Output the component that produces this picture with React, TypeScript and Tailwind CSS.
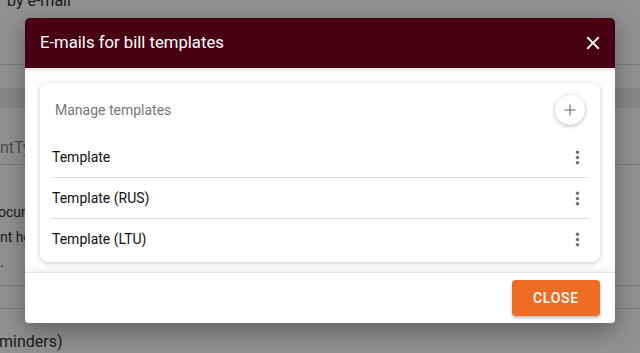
import React from "react";

function MoreVert() {
  return (
    <svg width="21" height="21" viewBox="0 0 24 24" fill="#757575">
      <path d="M12 8c1.1 0 2-.9 2-2s-.9-2-2-2-2 .9-2 2 .9 2 2 2zm0 2c-1.1 0-2 .9-2 2s.9 2 2 2 2-.9 2-2-.9-2-2-2zm0 6c-1.1 0-2 .9-2 2s.9 2 2 2 2-.9 2-2-.9-2-2-2z" />
    </svg>
  );
}

export default function App() {
  const rows = ["Template", "Template (RUS)", "Template (LTU)"];
  return (
    <div
      className="relative w-[640px] h-[353px] overflow-hidden bg-white"
      style={{ fontFamily: "Roboto, 'Liberation Sans', sans-serif" }}
    >
      {/* underlying page */}
      <div className="flex flex-col text-[#333]">
        <div className="h-[12px] overflow-hidden pl-[7px]">
          <div className="-mt-[9px] text-[16px] leading-[20px] whitespace-nowrap">by e-mail</div>
        </div>
        <div className="h-[53px] border-b border-[#dcdcdc]" />
        <div className="h-[23px]" />
        <div className="h-[20px] bg-[#ededed]" />
        <div className="h-[57px] border-b border-[#dcdcdc] flex items-end pb-[6px] text-[16px] leading-[20px] text-[#8a8a8a] whitespace-nowrap">
          <span>ntType</span>
        </div>
        <div className="pt-[35px] text-[14px] leading-[25px] whitespace-nowrap">
          <div className="-ml-[2px]">ocuments</div>
          <div>nt help</div>
          <div>.</div>
        </div>
        <div className="h-[11px] border-b border-[#dcdcdc]" />
        <div className="h-[23px] border-b border-[#dcdcdc]" />
        <div className="pt-[23px] text-[16px] leading-[20px] whitespace-nowrap -ml-[1px]">minders)</div>
      </div>

      {/* overlay */}
      <div className="absolute inset-0 bg-[rgba(0,0,0,0.43)]" />

      {/* dialog */}
      <div className="absolute left-[25px] top-[18px] w-[590px] h-[305px] bg-white rounded-[4px] shadow-[0_8px_24px_rgba(0,0,0,0.35)] flex flex-col overflow-hidden">
        <div className="h-[50px] bg-[#470012] flex items-center justify-between pl-[15px] pr-[11px] shrink-0 rounded-t-[4px]">
          <span className="text-white text-[16.7px]">E-mails for bill templates</span>
          <svg width="22" height="22" viewBox="0 0 24 24" fill="white">
            <path d="M19 6.41L17.59 5 12 10.59 6.41 5 5 6.41 10.59 12 5 17.59 6.41 19 12 13.41 17.59 19 19 17.59 13.41 12z" />
          </svg>
        </div>
        <div className="flex-1 px-[15px] pt-[15px] shadow-[inset_0_6px_6px_-6px_rgba(0,0,0,0.2)]">
          <div className="bg-white rounded-[8px] shadow-[0_1px_5px_rgba(0,0,0,0.22)] px-[12px] pb-[2px]">
            <div className="h-[54px] flex items-center justify-between pl-[3px] pr-[3px]">
              <span className="text-[14px] text-[#777]">Manage templates</span>
              <div className="w-[30px] h-[30px] rounded-full bg-white shadow-[0_1px_4px_rgba(0,0,0,0.3)] flex items-center justify-center">
                <svg width="12" height="12" viewBox="0 0 12 12" stroke="#666" strokeWidth="1.1">
                  <path d="M6 0.5v11M0.5 6h11" />
                </svg>
              </div>
            </div>
            {rows.map((r, i) => (
              <div
                key={r}
                className={
                  "h-[41px] flex items-center justify-between " +
                  (i < rows.length - 1 ? "border-b border-[#ddd]" : "")
                }
              >
                <span className="text-[14px] text-[#111]">{r}</span>
                <MoreVert />
              </div>
            ))}
          </div>
        </div>
        <div className="h-[51px] shrink-0 border-t border-[#e4e4e4] shadow-[0_-3px_6px_rgba(0,0,0,0.06)] flex items-center justify-end pr-[15px]">
          <button className="w-[88px] h-[36px] rounded-[4px] bg-[#ee6d22] text-white text-[14px] font-medium tracking-[0.75px] shadow-[0_2px_3px_rgba(0,0,0,0.25)]">
            CLOSE
          </button>
        </div>
      </div>
    </div>
  );
}
